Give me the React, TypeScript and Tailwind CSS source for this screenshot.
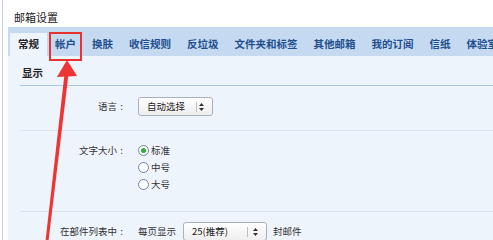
import React from "react";

const tabs = ["常规", "帐户", "换肤", "收信规则", "反垃圾", "文件夹和标签", "其他邮箱", "我的订阅", "信纸", "体验室"];

function UpDown() {
  return (
    <svg width="5" height="8" viewBox="0 0 5 8" className="shrink-0">
      <polygon points="2.5,0 5,3 0,3" fill="#333" />
      <polygon points="0,5 5,5 2.5,8" fill="#333" />
    </svg>
  );
}

function Select({ label, width, divider }: { label: string; width: string; divider: string }) {
  return (
    <div
      className={`relative h-[19px] ${width} rounded-[3px] border border-[#a7b1bd] bg-gradient-to-b from-white to-[#eeeeee] flex items-center pl-[8px] text-[9.5px] text-[#222] leading-none`}
    >
      <span>{label}</span>
      <div className={`absolute top-[4px] h-[10px] w-px bg-[#b9c0c8] ${divider}`} />
      <div className="absolute right-[8px] top-[5px]">
        <UpDown />
      </div>
    </div>
  );
}

function Radio({ checked, label }: { checked?: boolean; label: string }) {
  return (
    <div className="h-[17px] flex items-center">
      <div className="w-[11px] h-[11px] rounded-full border border-[#6f86a5] bg-white flex items-center justify-center">
        {checked && <div className="w-[5px] h-[5px] rounded-full bg-[#2fae3c]" />}
      </div>
      <span className="ml-[2px] text-[9.5px] text-[#333] leading-none">{label}</span>
    </div>
  );
}

function Label({ text }: { text: string }) {
  return (
    <div className="w-[106px] h-[17px] flex items-center justify-end text-[9.5px] text-[#333] leading-none">
      <span>{text}</span>
      <span className="w-[9px] text-center">:</span>
    </div>
  );
}

export default function App() {
  return (
    <div className="relative w-[493px] h-[240px] overflow-hidden bg-white font-['Noto_Sans_CJK_SC',sans-serif]">
      <div className="ml-[2px] h-full border-l border-[#c9d4e2] pl-[5px] flex flex-col">
        <div className="h-[27px] pt-[10px] pl-[6px] text-[11px] leading-[14px] text-[#222] shrink-0">邮箱设置</div>
        <div className="h-[29px] bg-[#c5daf1] flex items-end pl-[2px] shrink-0 whitespace-nowrap">
          {tabs.map((t, i) => (
            <div
              key={t}
              className={
                i === 0
                  ? "h-[23px] px-[8px] bg-[#eef4fc] flex items-center text-[10.5px] font-bold text-[#222] leading-none"
                  : "h-[23px] px-[8px] flex items-center text-[10.5px] font-bold text-[#1f4f8e] leading-none"
              }
            >
              {t}
            </div>
          ))}
        </div>
        <div className="flex-1 bg-[#eef4fc] pl-[12px]">
          <div className="h-[30px] flex items-end pb-[5px] pl-[2px] border-b border-[#abc8e8] text-[10.5px] font-bold text-[#222] leading-[14px]">
            显示
          </div>
          <div className="h-[45px] flex items-center pb-[3px] border-b border-[#d6e2ef]">
            <Label text="语言" />
            <div className="ml-[12px]">
              <Select label="自动选择" width="w-[75px]" divider="right-[15px]" />
            </div>
          </div>
          <div className="pt-[11px] pb-[18px] flex border-b border-[#d6e2ef]">
            <Label text="文字大小" />
            <div className="ml-[12px] flex flex-col">
              <Radio checked label="标准" />
              <Radio label="中号" />
              <Radio label="大号" />
            </div>
          </div>
          <div className="pt-[10px] flex items-center">
            <Label text="在部件列表中" />
            <div className="ml-[12px] text-[9.5px] text-[#333] leading-none">每页显示</div>
            <div className="ml-[7px]">
              <Select label="25(推荐)" width="w-[84px]" divider="right-[18px]" />
            </div>
            <div className="ml-[6px] text-[9.5px] text-[#333] leading-none">封邮件</div>
          </div>
        </div>
      </div>

      <div className="absolute left-[49px] top-[32px] w-[33px] h-[29px] border-2 border-[#ea3131]" />

      <svg className="absolute left-0 top-0" width="493" height="240" viewBox="0 0 493 240">
        <polygon points="45.5,241 48.5,241 68.5,74 64.5,74" fill="#ef3434" />
        <polygon points="67,60 57,77 77,76" fill="#ef3434" />
      </svg>
    </div>
  );
}
